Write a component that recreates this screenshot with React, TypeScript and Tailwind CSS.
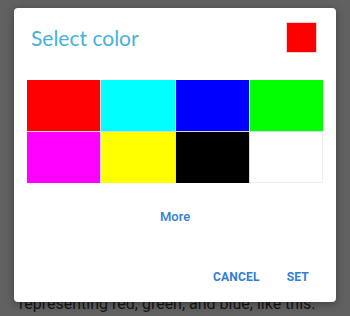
import React from 'react';

const COLORS = ['#ff0000', '#00ffff', '#0000ff', '#00ff00', '#ff00ff', '#ffff00', '#000000', '#ffffff'];

const App: React.FC = () => {
  return (
    <div className="relative w-[350px] h-[316px] overflow-hidden bg-[#616161]">
      {/* page content behind the dim */}
      <p className="pt-[294px] pl-[19px] text-[16px] leading-[20px] text-[#141414] font-['Roboto',sans-serif] whitespace-nowrap">
        representing red, green, and blue, like this:
      </p>

      {/* dialog */}
      <div className="absolute left-[14px] top-[8px] w-[322px] h-[294px] bg-white rounded-[4px] shadow-[0_2px_8px_rgba(0,0,0,0.35)] flex flex-col">
        <div className="flex items-start justify-between pl-[17px] pr-[19px] pt-[14px]">
          <h1 className="mt-[4px] text-[21px] leading-[24px] text-[#45b3d9] font-['Lato',sans-serif] font-normal">
            Select color
          </h1>
          <div className="w-[31px] h-[31px] bg-[#ff0000] border border-[#f0d0d0]" />
        </div>

        <div className="mx-[13px] mt-[27px] grid grid-cols-4 gap-px bg-[#d9d9d9]">
          {COLORS.map((c, i) => (
            <div
              key={i}
              className={`h-[51px] ${i === 7 ? 'bg-white border-r border-b border-[#eeeeee]' : ''}`}
              style={{ backgroundColor: c }}
            />
          ))}
        </div>

        <div className="mt-[25px] flex justify-center">
          <span className="text-[13px] leading-[18px] font-medium text-[#2f7ed8] font-['Roboto',sans-serif]">More</span>
        </div>

        <div className="mt-[42px] flex justify-end gap-[27px] pr-[27px] font-['Roboto',sans-serif]">
          <span className="text-[12px] leading-[18px] font-bold tracking-[0.2px] text-[#2f7ed8]">CANCEL</span>
          <span className="text-[12px] leading-[18px] font-bold tracking-[0.2px] text-[#2f7ed8]">SET</span>
        </div>
      </div>
    </div>
  );
};

export default App;
